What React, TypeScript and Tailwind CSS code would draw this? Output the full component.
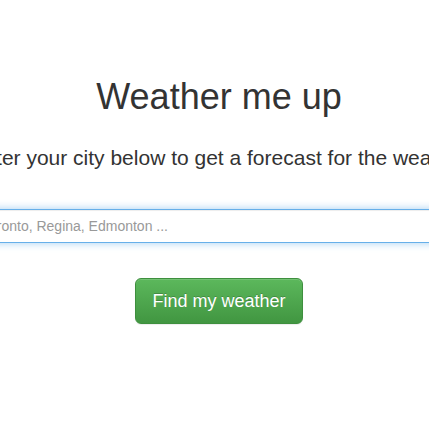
export default function App() {
  return (
    <div className="flex min-h-screen w-full flex-col items-center overflow-hidden bg-white pl-[9px] pt-[77px] font-['Liberation_Sans',Arial,sans-serif] text-[#333]">
      <h1 className="whitespace-nowrap text-[36px] leading-[39.6px]">Weather me up</h1>
      <p className="mt-[26px] whitespace-nowrap text-[21px] leading-[29.4px]">
        Enter your city below to get a forecast for the weather
      </p>
      <input
        type="text"
        placeholder="Toronto, Regina, Edmonton ..."
        className="mt-[37px] h-[34px] w-[500px] shrink-0 rounded-[4px] border border-[#66afe9] bg-white px-3 text-[14px] text-[#555] shadow-[inset_0_1px_1px_rgba(0,0,0,0.075),0_0_8px_rgba(102,175,233,0.6)] outline-none placeholder:text-[#999]"
      />
      <button
        type="button"
        className="mt-[35px] rounded-[6px] border border-[#3e8f3e] bg-gradient-to-b from-[#5cb85c] to-[#419641] px-4 py-[10px] text-[18px] leading-[24px] text-white shadow-[inset_0_1px_0_rgba(255,255,255,0.15),0_1px_1px_rgba(0,0,0,0.075)] [text-shadow:0_-1px_0_rgba(0,0,0,0.2)]"
      >
        Find my weather
      </button>
    </div>
  )
}
